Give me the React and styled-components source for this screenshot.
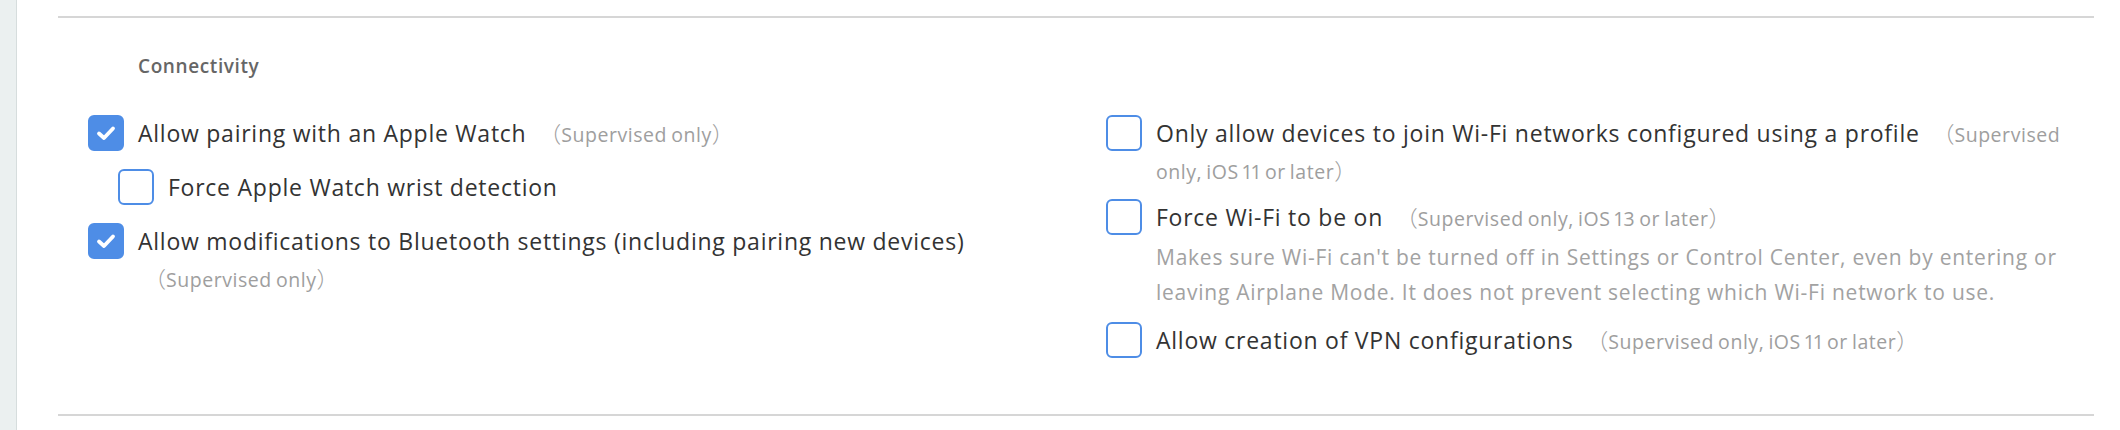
import React from 'react'
import styled, { createGlobalStyle } from 'styled-components'

const GlobalStyle = createGlobalStyle`
  html, body {
    margin: 0;
    padding: 0;
    background: #fff;
  }
  body {
    font-family: "Open Sans", "Noto Sans CJK SC", sans-serif;
    color: #333;
  }
`;

const Page = styled.div`
  display: flex;
  height: 430px;
  overflow: hidden;
`;

const Sidebar = styled.div`
  width: 16px;
  flex: none;
  background-color: #ebf0f0;
  border-right: 1px solid #d6dddd;
`;

const Main = styled.main`
  flex: 1;
  padding: 16px 26px 0 41px;
`;

const Section = styled.section`
  height: 396px;
  border-top: 2px solid #d6d6d6;
  border-bottom: 2px solid #d6d6d6;
`;

const Heading = styled.h3`
  margin: 37px 0 0 80px;
  font-size: 19px;
  line-height: 22px;
  letter-spacing: 0.6px;
  font-weight: 600;
  color: #666;
`;

const Columns = styled.div`
  display: grid;
  grid-template-columns: 970px 964px;
  column-gap: 48px;
  margin: 38px 0 0 30px;
  align-items: start;
`;

const Column = styled.div`
  display: flex;
  flex-direction: column;
  gap: ${p => p.$gap}px;
`;

const Item = styled.div`
  display: flex;
  align-items: flex-start;
  gap: 14px;
  margin-left: ${p => (p.$indent ? 30 : 0)}px;
`;

const Box = styled.span`
  flex: none;
  box-sizing: border-box;
  width: 36px;
  height: 36px;
  border-radius: 6px;
  border: 2px solid #4e8de6;
  background-color: ${p => (p.$checked ? '#4e8de6' : '#fff')};
  display: flex;
  align-items: center;
  justify-content: center;
`;

const Body = styled.div`
  flex: 1;
  min-width: 0;
`;

const Label = styled.div`
  font-size: 23px;
  line-height: 37px;
  letter-spacing: 0.75px;
  color: #333;
`;

const Note = styled.span`
  font-size: 19.5px;
  line-height: 1;
  letter-spacing: 0.55px;
  word-spacing: -1.5px;
  font-variant-numeric: proportional-nums;
  color: #9e9e9e;
  margin-left: 6px;
`;

const Paren = styled.span`
  font-family: "Noto Sans CJK JP", sans-serif;
  font-size: 22px;
  font-weight: 300;
  letter-spacing: 0;
`;

const Description = styled.div`
  margin-top: 4px;
  font-size: 21px;
  line-height: 35px;
  letter-spacing: 0.75px;
  color: #a2a2a2;
  padding-bottom: 2px;
`;

const Check = () => (
  <svg width="22" height="22" viewBox="0 0 22 22">
    <path d="M4 11.5 L9 16 L18 6.5" fill="none" stroke="#fff" strokeWidth="3.8" strokeLinecap="round" strokeLinejoin="round" />
  </svg>
);

const Option = ({ checked, indent, label, note, description }) => (
  <Item $indent={indent}>
    <Box $checked={checked}>{checked && <Check />}</Box>
    <Body>
      <Label>
        {label}
        {note && (
          <>
            {' '}
            <Note>
              <Paren>（</Paren>
              {note}
              <Paren>）</Paren>
            </Note>
          </>
        )}
      </Label>
      {description && <Description>{description}</Description>}
    </Body>
  </Item>
);

export default function App() {
  return (
    <Page>
      <GlobalStyle />
      <Sidebar />
      <Main>
        <Section>
          <Heading>Connectivity</Heading>
          <Columns>
            <Column $gap={17}>
              <Option checked label="Allow pairing with an Apple Watch" note="Supervised only" />
              <Option indent label="Force Apple Watch wrist detection" />
              <Option
                checked
                label="Allow modifications to Bluetooth settings (including pairing new devices)"
                note="Supervised only"
              />
            </Column>
            <Column $gap={10}>
              <Option
                label="Only allow devices to join Wi-Fi networks configured using a profile"
                note="Supervised only, iOS 11 or later"
              />
              <Option
                label="Force Wi-Fi to be on"
                note="Supervised only, iOS 13 or later"
                description="Makes sure Wi-Fi can't be turned off in Settings or Control Center, even by entering or leaving Airplane Mode. It does not prevent selecting which Wi-Fi network to use."
              />
              <Option
                label="Allow creation of VPN configurations"
                note="Supervised only, iOS 11 or later"
              />
            </Column>
          </Columns>
        </Section>
      </Main>
    </Page>
  )
}
